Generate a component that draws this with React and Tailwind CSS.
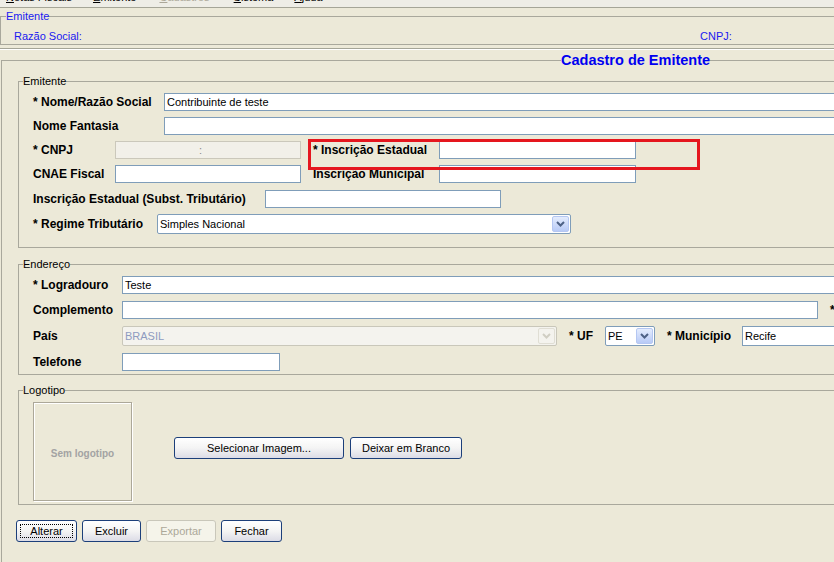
import React from "react";

function Chevron({ color = "#4D6185" }) {
  return (
    <svg width="9" height="6" viewBox="0 0 9 6">
      <path d="M1 1 L4.5 4.5 L8 1" fill="none" stroke={color} strokeWidth="2" />
    </svg>
  );
}

function TextBox({ w, value, h = "h-[18px]", disabled }) {
  return (
    <div
      className={`${w} ${h} shrink-0 flex items-center pl-[2px] border ${
        disabled ? "bg-[#F2F0E9] border-[#CBC8BB]" : "bg-white border-[#7F9DB9]"
      } text-black leading-none`}
    >
      {value}
    </div>
  );
}

function Combo({ w, value, disabled }) {
  return (
    <div
      className={`${w} h-[20px] shrink-0 flex items-center border rounded-[2px] ${
        disabled ? "bg-[#F4F3EE] border-[#C9C7BA] text-[#8E9BC0]" : "bg-white border-[#7F9DB9] text-black"
      }`}
    >
      <span className="flex-1 pl-[2px] leading-none">{value}</span>
      <div
        className={`w-[17px] h-[16px] mr-[1px] flex items-center justify-center rounded-[2px] border ${
          disabled
            ? "bg-[#F4F3EE] border-[#E0DED4]"
            : "bg-linear-to-b from-[#E4ECFD] to-[#B8CAF6] border-[#B5C7F2]"
        }`}
      >
        <Chevron color={disabled ? "#D0CEC3" : "#4D6185"} />
      </div>
    </div>
  );
}

function Btn({ w, children, disabled, focus }) {
  return (
    <div
      className={`${w} h-[22px] shrink-0 relative flex items-center justify-center rounded-[3px] border ${
        disabled
          ? "border-[#C9C7BA] bg-[#F5F4EA] text-[#ACA899]"
          : "border-[#1C3F7A] bg-linear-to-b from-white via-[#F4F4F4] to-[#DCDCE6] text-black"
      }`}
    >
      {focus && <span className="absolute inset-[3px] border border-dotted border-black" />}
      <span className="leading-none">{children}</span>
    </div>
  );
}

function Label({ w, children }) {
  return <span className={`${w} shrink-0 font-bold text-[12px] leading-none`}>{children}</span>;
}

export default function App() {
  return (
    <div className="relative w-[834px] h-[562px] overflow-hidden bg-[#ECE9D8] text-[11px] text-black font-['Liberation_Sans',Arial,sans-serif] flex flex-col">
      {/* menu bar */}
      <div className="h-[8px] shrink-0 overflow-hidden bg-[#EEEDE6] border-b border-[#A5A597] flex">
        <div className="flex -mt-[8px] leading-[11px] h-[11px]">
          <span className="ml-[6px]"><u>N</u>otas Fiscais</span>
          <span className="ml-[21px]"><u>E</u>mitente</span>
          <span className="ml-[23px] text-[#ACA899]"><u>C</u>adastros</span>
          <span className="ml-[24px]"><u>S</u>istema</span>
          <span className="ml-[21px]"><u>A</u>juda</span>
        </div>
      </div>

      {/* top info fieldset */}
      <fieldset className="mt-[2px] w-[840px] border border-[#A9A89C] shrink-0">
        <legend className="ml-[5px] leading-[13px] text-[#1A1AF0]">Emitente</legend>
        <div className="flex pt-[7px] pb-[1px] pl-[13px] h-[21px] leading-[13px] text-[#1A1AF0]">
          <span className="w-[686px]">Razão Social:</span>
          <span>CNPJ:</span>
        </div>
      </fieldset>

      {/* separator */}
      <div className="mt-[3px] h-[2px] shrink-0 border-t border-[#A5A597] border-b border-b-white" />

      {/* main panel */}
      <fieldset className="mt-[2px] ml-[1px] w-[1270px] border border-[#A9A89C] pb-[40px] shrink-0">
        <legend className="ml-[559px] leading-[17px] text-[14.5px] font-bold text-[#0000F0]">
          Cadastro de Emitente
        </legend>
        <div className="pl-[16px]">
          {/* Emitente group */}
          <fieldset className="mt-[6px] w-[840px] border border-[#A9A89C] pb-[13px]">
            <legend className="ml-[4px] leading-[13px]">Emitente</legend>
            <div className="pl-[14px]">
              <div className="flex items-center h-[18px] mt-[5px]">
                <Label w="w-[131px]">* Nome/Razão Social</Label>
                <TextBox w="w-[700px]" value="Contribuinte de teste" />
              </div>
              <div className="flex items-center h-[18px] mt-[6px]">
                <Label w="w-[131px]">Nome Fantasia</Label>
                <TextBox w="w-[700px]" value="" />
              </div>
              <div className="flex items-center h-[18px] mt-[6px]">
                <Label w="w-[82px]">* CNPJ</Label>
                <TextBox
                  w="w-[186px]"
                  disabled
                  value={<span className="ml-[81px] text-[#8A8A8A]">:</span>}
                />
                <span className="ml-[12px]" />
                <Label w="w-[126px]">* Inscrição Estadual</Label>
                <TextBox w="w-[197px]" value="" />
              </div>
              <div className="flex items-center h-[18px] mt-[6px]">
                <Label w="w-[82px]">CNAE Fiscal</Label>
                <TextBox w="w-[186px]" value="" />
                <span className="ml-[12px]" />
                <Label w="w-[126px]">Inscrição Municipal</Label>
                <TextBox w="w-[197px]" value="" />
              </div>
              <div className="flex items-center h-[18px] mt-[7px]">
                <Label w="w-[232px]">Inscrição Estadual (Subst. Tributário)</Label>
                <TextBox w="w-[236px]" value="" />
              </div>
              <div className="flex items-center h-[20px] mt-[6px]">
                <Label w="w-[124px]">* Regime Tributário</Label>
                <Combo w="w-[414px]" value="Simples Nacional" />
              </div>
            </div>
          </fieldset>

          {/* Endereço group */}
          <fieldset className="mt-[10px] w-[840px] border border-[#A9A89C] pb-[3px]">
            <legend className="ml-[4px] leading-[13px]">Endereço</legend>
            <div className="pl-[14px]">
              <div className="flex items-center h-[18px] mt-[5px]">
                <Label w="w-[89px]">* Logradouro</Label>
                <TextBox w="w-[720px]" value="Teste" />
              </div>
              <div className="flex items-center h-[18px] mt-[7px]">
                <Label w="w-[89px]">Complemento</Label>
                <TextBox w="w-[696px]" value="" />
                <span className="ml-[12px] font-bold text-[12px]">*</span>
              </div>
              <div className="flex items-center h-[20px] mt-[7px]">
                <Label w="w-[89px]">País</Label>
                <Combo w="w-[435px]" value="BRASIL" disabled />
                <span className="ml-[12px]" />
                <Label w="w-[36px]">* UF</Label>
                <Combo w="w-[50px]" value="PE" />
                <span className="ml-[12px]" />
                <Label w="w-[75px]">* Município</Label>
                <TextBox w="w-[200px]" h="h-[20px]" value="Recife" />
              </div>
              <div className="flex items-center h-[18px] mt-[7px]">
                <Label w="w-[89px]">Telefone</Label>
                <TextBox w="w-[158px]" value="" />
              </div>
            </div>
          </fieldset>

          {/* Logotipo group */}
          <fieldset className="mt-[9px] w-[840px] border border-[#A9A89C] pb-[3px]">
            <legend className="ml-[4px] leading-[13px]">Logotipo</legend>
            <div className="flex items-start mt-[5px] pl-[14px]">
              <div className="w-[99px] h-[99px] shrink-0 border border-[#ACA899] shadow-[inset_1px_1px_0_#FFFFFF,1px_1px_0_#FFFFFF] flex items-center justify-center pt-[3px]">
                <span className="font-bold text-[10px] text-[#A3A3A3]">Sem logotipo</span>
              </div>
              <div className="flex gap-[6px] ml-[42px] mt-[35px]">
                <Btn w="w-[170px]">Selecionar Imagem...</Btn>
                <Btn w="w-[112px]">Deixar em Branco</Btn>
              </div>
            </div>
          </fieldset>

          {/* action buttons */}
          <div className="flex gap-[5px] mt-[15px] -ml-[2px]">
            <Btn w="w-[61px]" focus>Alterar</Btn>
            <Btn w="w-[59px]">Excluir</Btn>
            <Btn w="w-[70px]" disabled>Exportar</Btn>
            <Btn w="w-[61px]">Fechar</Btn>
          </div>
        </div>
      </fieldset>

      {/* red annotation box */}
      <div className="absolute left-[308px] top-[139px] w-[392px] h-[31px] border-[3px] border-[#E5161E] pointer-events-none" />
    </div>
  );
}
